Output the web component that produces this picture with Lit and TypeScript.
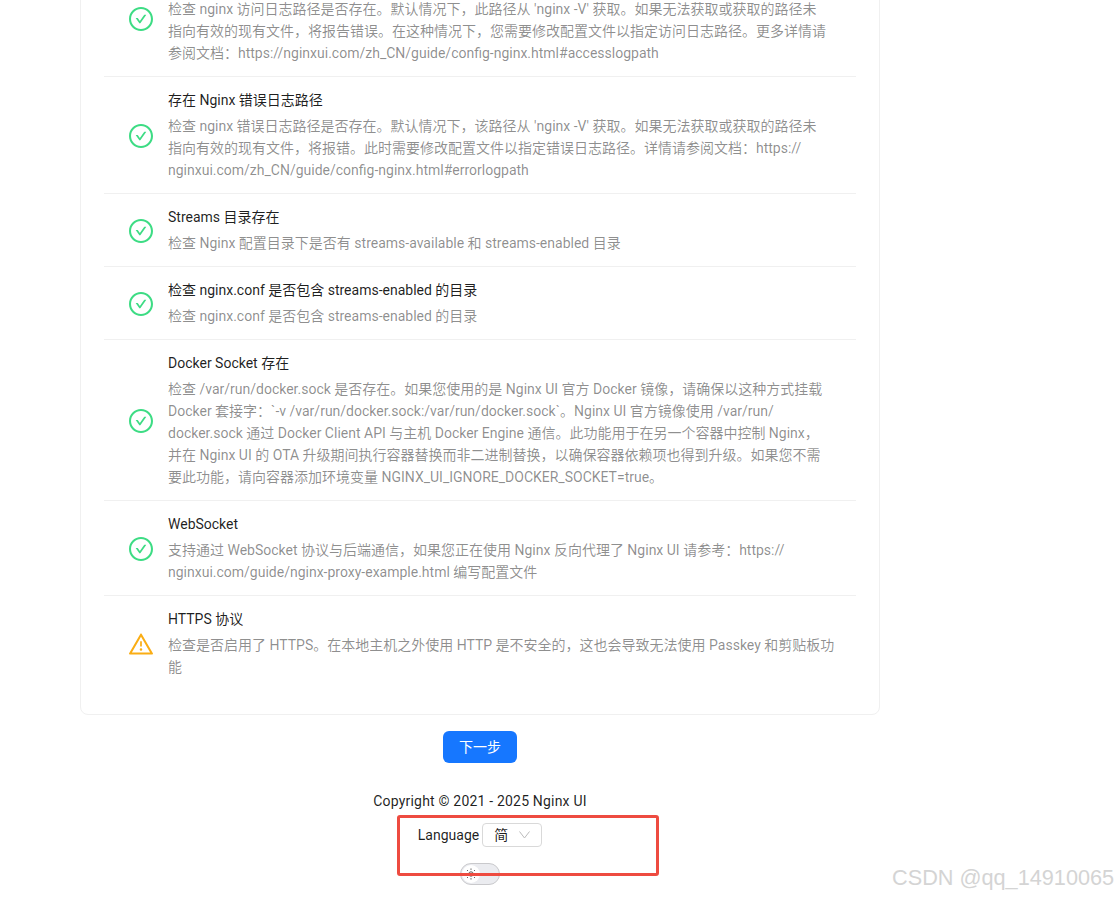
import { LitElement, html, css, svg } from "lit";
import { customElement } from "lit/decorators.js";

interface Item { title: string; lines: string[]; warn?: boolean; }

const ITEMS: Item[] = [
  { title: "存在 Nginx 访问日志路径", lines: [
    "检查 nginx 访问日志路径是否存在。默认情况下，此路径从 'nginx -V' 获取。如果无法获取或获取的路径未",
    "指向有效的现有文件，将报告错误。在这种情况下，您需要修改配置文件以指定访问日志路径。更多详情请",
    "参阅文档：https://nginxui.com/zh_CN/guide/config-nginx.html#accesslogpath" ] },
  { title: "存在 Nginx 错误日志路径", lines: [
    "检查 nginx 错误日志路径是否存在。默认情况下，该路径从 'nginx -V' 获取。如果无法获取或获取的路径未",
    "指向有效的现有文件，将报错。此时需要修改配置文件以指定错误日志路径。详情请参阅文档：https://",
    "nginxui.com/zh_CN/guide/config-nginx.html#errorlogpath" ] },
  { title: "Streams 目录存在", lines: ["检查 Nginx 配置目录下是否有 streams-available 和 streams-enabled 目录"] },
  { title: "检查 nginx.conf 是否包含 streams-enabled 的目录", lines: ["检查 nginx.conf 是否包含 streams-enabled 的目录"] },
  { title: "Docker Socket 存在", lines: [
    "检查 /var/run/docker.sock 是否存在。如果您使用的是 Nginx UI 官方 Docker 镜像，请确保以这种方式挂载",
    "Docker 套接字：`-v /var/run/docker.sock:/var/run/docker.sock`。Nginx UI 官方镜像使用 /var/run/",
    "docker.sock 通过 Docker Client API 与主机 Docker Engine 通信。此功能用于在另一个容器中控制 Nginx，",
    "并在 Nginx UI 的 OTA 升级期间执行容器替换而非二进制替换，以确保容器依赖项也得到升级。如果您不需",
    "要此功能，请向容器添加环境变量 NGINX_UI_IGNORE_DOCKER_SOCKET=true。" ] },
  { title: "WebSocket", lines: [
    "支持通过 WebSocket 协议与后端通信，如果您正在使用 Nginx 反向代理了 Nginx UI 请参考：https://",
    "nginxui.com/guide/nginx-proxy-example.html 编写配置文件" ] },
  { title: "HTTPS 协议", warn: true, lines: [
    "检查是否启用了 HTTPS。在本地主机之外使用 HTTP 是不安全的，这也会导致无法使用 Passkey 和剪贴板功",
    "能" ] },
];

const okIcon = svg`<svg class="icon ok" viewBox="64 64 896 896" fill="currentColor"><path d="M699 353h-46.9c-10.2 0-19.9 4.9-25.9 13.3L469 584.3l-71.2-98.8c-6-8.3-15.6-13.3-25.9-13.3H325c-6.5 0-10.3 7.4-6.5 12.7l124.6 172.8a31.8 31.8 0 0051.7 0l210.6-292c3.9-5.3.1-12.7-6.4-12.7z"/><path d="M512 64C264.6 64 64 264.6 64 512s200.6 448 448 448 448-200.6 448-448S759.4 64 512 64zm0 820c-205.4 0-372-166.6-372-372s166.6-372 372-372 372 166.6 372 372-166.6 372-372 372z"/></svg>`;
const warnIcon = svg`<svg class="icon warn" viewBox="64 64 896 896" fill="currentColor"><path d="M464 720a48 48 0 1096 0 48 48 0 10-96 0zm16-304v184c0 4.4 3.6 8 8 8h48c4.4 0 8-3.6 8-8V416c0-4.4-3.6-8-8-8h-48c-4.4 0-8 3.6-8 8zm475.7 440l-416-720c-6.2-10.7-16.9-16-27.7-16s-21.6 5.3-27.7 16l-416 720C56 877.4 71.4 904 96 904h832c24.6 0 40-26.6 27.7-48zm-783.5-27.9L512 239.9l339.8 588.2H172.2z"/></svg>`;
const sunIcon = svg`<svg class="sun" viewBox="0 0 12 12" fill="none" stroke="#555" stroke-width="1"><circle cx="6" cy="6" r="2.2"/><path d="M6 .5v1.3M6 10.2v1.3M.5 6h1.3M10.2 6h1.3M2.1 2.1l.9.9M9 9l.9.9M2.1 9.9l.9-.9M9 3l.9-.9"/></svg>`;

@customElement("app-root")
export class AppRoot extends LitElement {
  static styles = css`
    :host {
      display: block;
      position: relative;
      height: 898px;
      overflow: hidden;
      background: #fff;
      font-family: Roboto, "Noto Sans CJK SC", sans-serif;
      font-size: 14px;
      line-height: 22px;
      color: rgba(0, 0, 0, 0.88);
    }
    .page { display: flex; flex-direction: column; align-items: center; width: 800px; margin: -65px 0 0 80px; }
    .card {
      box-sizing: border-box;
      width: 800px;
      padding: 24px 23px;
      border: 1px solid #f0f0f0;
      border-radius: 8px;
    }
    .item {
      display: flex;
      align-items: center;
      gap: 16px;
      padding: 12px 24px;
      border-bottom: 1px solid #f0f0f0;
      white-space: nowrap;
    }
    .item:last-child { border-bottom: 0; }
    .icon { width: 24px; height: 24px; flex: none; display: block; margin: 1px -0.5px 0 0.5px; }
    .ok { color: #3ddc84; }
    .warn { color: #faad14; }
    .title { margin-bottom: 4px; }
    .desc { color: rgba(0, 0, 0, 0.45); }
    .next {
      margin-top: 16px;
      width: 74px;
      height: 32px;
      border: 0;
      padding: 0;
      border-radius: 6px;
      background: #1677ff;
      color: #fff;
      font: inherit;
    }
    .footer { display: flex; flex-direction: column; align-items: center; margin-top: 27px; }
    .copy { letter-spacing: 0.19px; }
    .lang { display: flex; align-items: center; gap: 3px; margin-top: 11px; height: 24px; }
    .select {
      box-sizing: border-box;
      width: 60px;
      height: 24px;
      display: flex;
      align-items: center;
      justify-content: space-between;
      padding: 0 11px;
      border: 1px solid #d9d9d9;
      border-radius: 4px;
    }
    .chev { width: 11px; height: 10px; display: block; }
    .switch {
      box-sizing: border-box;
      width: 40px;
      height: 22px;
      margin-top: 16px;
      padding: 1px;
      border: 1px solid #c9c9cc;
      border-radius: 11px;
      background: #ebecf0;
    }
    .knob {
      width: 18px;
      height: 18px;
      border-radius: 50%;
      background: #fff;
      display: flex;
      align-items: center;
      justify-content: center;
    }
    .sun { width: 12px; height: 12px; display: block; }
    .mark {
      position: absolute;
      left: 397px;
      top: 815px;
      box-sizing: border-box;
      width: 262px;
      height: 61px;
      border: 3px solid #ee4b40;
      border-radius: 3px;
    }
    .wm {
      position: absolute;
      left: 892px;
      top: 866px;
      font-family: "Liberation Sans", sans-serif;
      font-size: 21.7px;
      line-height: 24px;
      color: #d4d4d4;
      white-space: nowrap;
    }
  `;

  render() {
    return html`
      <div class="page">
        <div class="card">
          ${ITEMS.map((it) => html`
            <div class="item">
              ${it.warn ? warnIcon : okIcon}
              <div>
                <div class="title">${it.title}</div>
                <div class="desc">${it.lines.map((l) => html`<div>${l}</div>`)}</div>
              </div>
            </div>`)}
        </div>
        <button class="next">下一步</button>
        <div class="footer">
          <div class="copy">Copyright © 2021 - 2025 Nginx UI</div>
          <div class="lang">
            <span>Language</span>
            <div class="select">
              <span>简</span>
              <svg class="chev" viewBox="0 0 11 10" fill="none" stroke="#bbb" stroke-width="1"><path d="M.5 1.5 5.5 8l5-6.5"/></svg>
            </div>
          </div>
          <div class="switch"><div class="knob">${sunIcon}</div></div>
        </div>
      </div>
      <div class="mark"></div>
      <div class="wm">CSDN @qq_14910065</div>
    `;
  }
}
